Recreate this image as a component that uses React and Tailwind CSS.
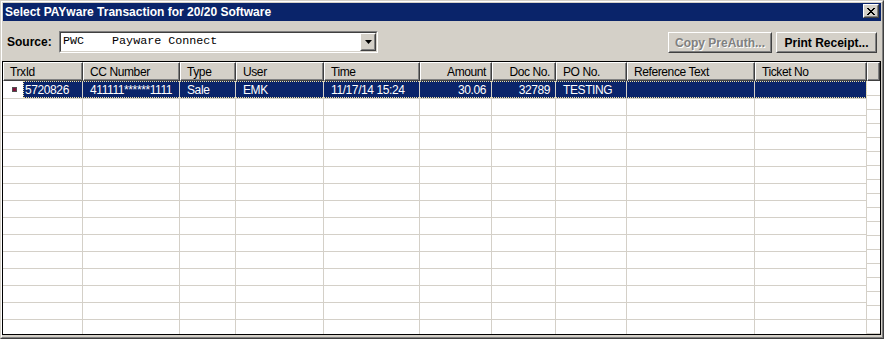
import React from 'react';

const cols = [
  { label: 'TrxId', w: 'w-[80px]' },
  { label: 'CC Number', w: 'w-[97px]' },
  { label: 'Type', w: 'w-[56px]' },
  { label: 'User', w: 'w-[88px]' },
  { label: 'Time', w: 'w-[96px]' },
  { label: 'Amount', w: 'w-[72px]', right: true },
  { label: 'Doc No.', w: 'w-[64px]', right: true },
  { label: 'PO No.', w: 'w-[71px]' },
  { label: 'Reference Text', w: 'w-[128px]' },
  { label: 'Ticket No', w: 'w-[112px]' },
];

const selected = ['5720826', '411111******1111', 'Sale', 'EMK', '11/17/14 15:24', '30.06', '32789', 'TESTING', '', ''];

function Raised({ className = '', children }) {
  return (
    <div className={`border border-t-white border-l-white border-r-[#404040] border-b-[#404040] ${className}`}>
      <div className="w-full h-full border border-t-[#d4d0c8] border-l-[#d4d0c8] border-r-[#808080] border-b-[#808080] flex items-center justify-center">
        {children}
      </div>
    </div>
  );
}

function Row({ sel, first }) {
  const h = first ? 'h-[18px]' : 'h-[17px]';
  return (
    <div className={`flex ${h} border-b border-[#d4d0c8]`}>
      <div className="w-[20px] flex items-center pl-[9px]">
        {sel && <div className="w-[5px] h-[5px] bg-[#80103a] border border-[#505050]" />}
      </div>
      <div className="relative flex">
        {cols.map((c, i) => (
          <div
            key={c.label}
            className={`${i === 0 ? 'w-[60px] pl-[2px]' : `${c.w} pl-[7px]`} ${c.right ? 'justify-end pr-[5px]' : ''} flex items-center border-r border-[#d4d0c8] whitespace-nowrap overflow-hidden ${sel ? 'bg-[#0a246a] text-white' : ''}`}
          >
            {sel ? selected[i] : ''}
          </div>
        ))}
        {sel && <div className="absolute inset-0 border border-dotted border-[#f0e2a0] pointer-events-none" />}
      </div>
    </div>
  );
}

export default function App() {
  const rows = Array.from({ length: 16 });
  const filler = Array.from({ length: 19 });

  return (
    <div className="w-[884px] h-[339px] border border-t-[#d4d0c8] border-l-[#d4d0c8] border-r-[#404040] border-b-[#404040] bg-[#d4d0c8] font-['Liberation_Sans',Arial,sans-serif] text-[12px] text-black overflow-hidden">
      <div className="h-full border border-t-white border-l-white border-r-[#808080] border-b-[#808080] flex flex-col">
        {/* title bar */}
        <div className="mx-[1px] mt-[1px] h-[18px] shrink-0 bg-[#0a246a] flex items-start justify-between pl-[2px] pr-[2px]">
          <span className="text-white font-bold text-[12px] leading-[18px]">Select PAYware Transaction for 20/20 Software</span>
          <Raised className="w-[16px] h-[14px] mt-[1px] bg-[#d4d0c8]">
            <svg width="8" height="7" viewBox="0 0 8 7" shapeRendering="crispEdges">
              <path d="M0.5 0 L7.5 7 M7.5 0 L0.5 7" stroke="#000" strokeWidth="1.8" />
            </svg>
          </Raised>
        </div>

        {/* toolbar */}
        <div className="h-[40px] shrink-0 flex items-start pt-[10px] pl-[5px] pr-[5px]">
          <div className="w-[52px] h-[22px] flex items-center font-bold">Source:</div>
          <div className="w-[319px] h-[22px] border border-t-[#808080] border-l-[#808080] border-r-white border-b-white">
            <div className="h-full border border-t-[#404040] border-l-[#404040] border-r-[#d4d0c8] border-b-[#d4d0c8] bg-white flex">
              <div className="flex-1 flex items-center pl-[2px] font-['Liberation_Mono','Courier_New',monospace] text-[11.7px] whitespace-pre">
                {'PWC    Payware Connect'}
              </div>
              <Raised className="w-[16px] h-full bg-[#d4d0c8]">
                <svg width="7" height="4" viewBox="0 0 7 4">
                  <polygon points="0,0 7,0 3.5,4" fill="#000" />
                </svg>
              </Raised>
            </div>
          </div>
          <div className="flex-1" />
          <Raised className="w-[104px] h-[21px] mt-[1px]">
            <span className="font-bold text-[#808080] [text-shadow:1px_1px_0_#fff]">Copy PreAuth...</span>
          </Raised>
          <Raised className="w-[101px] h-[21px] mt-[1px] ml-[4px]">
            <span className="font-bold">Print Receipt...</span>
          </Raised>
        </div>

        {/* grid */}
        <div className="h-[274px] mr-[1px] mb-[2px] shrink-0 border border-black flex flex-col tracking-[-0.4px] overflow-hidden">
          <div className="h-[19px] shrink-0 flex">
            {cols.map((c) => (
              <div
                key={c.label}
                className={`${c.w} h-full border border-t-white border-l-white border-r-[#404040] border-b-[#404040] shadow-[inset_-1px_-1px_0_#808080] flex items-center ${c.right ? 'justify-end pr-[5px]' : 'pl-[6px]'} whitespace-nowrap`}
              >
                {c.label}
              </div>
            ))}
            <div className="flex-1 h-full border border-t-white border-l-white border-r-[#404040] border-b-[#404040] shadow-[inset_-1px_-1px_0_#808080]" />
          </div>
          <div className="flex-1 flex bg-white overflow-hidden">
            <div className="w-[864px] shrink-0">
              {rows.map((_, i) => (
                <Row key={i} sel={i === 0} first={i === 0} />
              ))}
            </div>
            <div className="flex-1">
              {filler.map((_, i) => (
                <div key={i} className={`${i === 0 ? 'h-[15px]' : 'h-[14px]'} border-b border-[#d4d0c8]`} />
              ))}
            </div>
          </div>
        </div>
      </div>
    </div>
  );
}
